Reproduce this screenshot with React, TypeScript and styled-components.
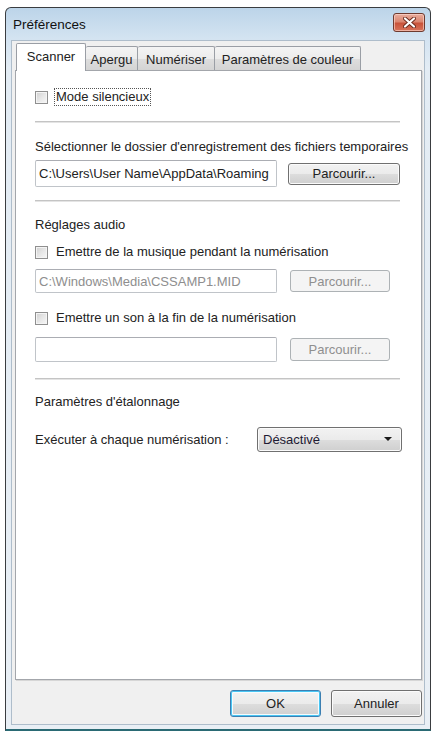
import React from "react";
import styled, { createGlobalStyle, css } from "styled-components";

const GlobalStyle = createGlobalStyle`
  html, body { margin: 0; padding: 0; background: #ffffff; }
  body {
    font-family: "Liberation Sans", Arial, sans-serif;
    font-size: 13px;
    color: #222222;
  }
  * { box-sizing: border-box; }
`;

const Window = styled.div`
  margin: 7px 0 0 5px;
  width: 426px;
  height: 724px;
  border: 1px solid #3a3d40;
  border-bottom: 2px solid #2a6a74;
  border-radius: 6px 6px 0 0;
  background: linear-gradient(#bcd4e9 0px, #d3e3f1 30px, #e3ecf4 60px, #e9eff5 100%);
  display: flex;
  flex-direction: column;
  padding: 0 5px 4px;
`;

const TitleBar = styled.div`
  height: 32px;
  display: flex;
  justify-content: space-between;
  align-items: flex-start;
  padding-left: 2px;
`;

const Title = styled.span`
  margin-top: 9px;
  font-size: 13.5px;
  color: #111;
`;

const CloseButton = styled.div`
  margin-top: 5px;
  width: 32px;
  height: 19px;
  border: 1px solid #6e3a2f;
  border-radius: 3px;
  background: linear-gradient(#e9ad9e 0%, #db8670 45%, #c9533a 55%, #d8735a 100%);
  box-shadow: inset 0 0 0 1px rgba(255, 220, 210, 0.6);
  display: flex;
  align-items: center;
  justify-content: center;
`;

const Client = styled.div`
  flex: 1;
  background: #f0f0f0;
  border: 1px solid #aebdcb;
  padding: 2px 2px 0 3px;
  display: flex;
  flex-direction: column;
`;

const TabStrip = styled.div`
  height: 27px;
  display: flex;
  align-items: flex-end;
  margin-left: 1px;
  position: relative;
  z-index: 1;
`;

const Tab = styled.div<{ $w: number; $active?: boolean }>`
  width: ${(p) => p.$w}px;
  height: 24px;
  border: 1px solid #9a9ea5;
  border-bottom: none;
  border-left-width: 0;
  border-radius: 2px 2px 0 0;
  background: linear-gradient(#f4f4f4 0%, #ececec 50%, #dedede 51%, #d4d4d4 100%);
  display: flex;
  align-items: center;
  justify-content: center;
  padding-top: 1px;
  color: #222;
  ${(p) =>
    p.$active &&
    css`
      height: 28px;
      margin-bottom: -1px;
      border-left-width: 1px;
      border-color: #9a9ea5;
      background: #ffffff;
      padding-top: 0;
      padding-bottom: 3px;
    `}
`;

const Panel = styled.div`
  height: 610px;
  background: #ffffff;
  border: 1px solid #a3a6ab;
  box-shadow: 1px 1px 0 #d6d6d6;
  display: flex;
  flex-direction: column;
  padding-left: 19px;
`;

const Row = styled.div<{ $mt: number; $h: number }>`
  margin-top: ${(p) => p.$mt}px;
  height: ${(p) => p.$h}px;
  display: flex;
  align-items: center;
`;

const Separator = styled.div<{ $mt: number }>`
  margin-top: ${(p) => p.$mt}px;
  width: 365px;
  height: 2px;
  border-top: 1px solid #c4c4c4;
  border-bottom: 1px solid #e4e4e4;
`;

const Label = styled.div<{ $mt: number }>`
  margin-top: ${(p) => p.$mt}px;
  height: 16px;
  line-height: 16px;
  white-space: nowrap;
`;

const CheckBox = styled.span`
  width: 13px;
  height: 13px;
  border: 1px solid #8f8f8f;
  background: linear-gradient(135deg, #cfcfcf 0%, #e6e6e6 50%, #f7f7f7 100%);
  box-shadow: inset 0 0 0 1px #f4f4f4;
  flex: none;
`;

const CheckText = styled.span<{ $focus?: boolean }>`
  margin-left: ${(p) => (p.$focus ? 6 : 8)}px;
  line-height: 16px;
  white-space: nowrap;
  ${(p) =>
    p.$focus &&
    css`
      border: 1px dotted #555;
      padding: 0 1px;
    `}
`;

const TextBox = styled.div<{ $h: number; $disabled?: boolean }>`
  width: 242px;
  height: ${(p) => p.$h}px;
  border: 1px solid #c0c4c9;
  border-top-color: #abadb3;
  border-radius: 2px;
  background: #ffffff;
  padding: 0 3px;
  display: flex;
  align-items: center;
  white-space: nowrap;
  color: ${(p) => (p.$disabled ? "#8e8e8e" : "#222")};
`;

const PushButton = styled.div<{ $w: number; $h: number; $ml?: number; $disabled?: boolean; $default?: boolean }>`
  width: ${(p) => p.$w}px;
  height: ${(p) => p.$h}px;
  margin-left: ${(p) => p.$ml ?? 0}px;
  border: 1px solid #707070;
  border-radius: 3px;
  background: linear-gradient(#f2f2f2 0%, #ebebeb 50%, #dddddd 51%, #cfcfcf 100%);
  box-shadow: inset 0 0 0 1px #fbfbfb;
  display: flex;
  align-items: center;
  justify-content: center;
  color: #222;
  flex: none;
  ${(p) =>
    p.$disabled &&
    css`
      border-color: #adb2b5;
      background: #f4f4f4;
      box-shadow: none;
      color: #8f8f8f;
    `}
  ${(p) =>
    p.$default &&
    css`
      border-color: #3c7fb1;
      box-shadow: inset 0 0 0 1px #48c5f3, inset 0 0 0 2px #f4fbfe;
    `}
`;

const ComboRow = styled.div<{ $mt: number }>`
  margin-top: ${(p) => p.$mt}px;
  width: 367px;
  height: 26px;
  display: flex;
  align-items: center;
  justify-content: space-between;
`;

const Combo = styled.div`
  width: 145px;
  height: 25px;
  border: 1px solid #707070;
  border-radius: 3px;
  background: linear-gradient(#f2f2f2 0%, #ebebeb 50%, #dddddd 51%, #cfcfcf 100%);
  box-shadow: inset 0 0 0 1px #fbfbfb;
  display: flex;
  align-items: center;
  justify-content: space-between;
  padding: 0 9px 0 5px;
  color: #1e1a33;
`;

const Arrow = styled.span`
  width: 0;
  height: 0;
  border-left: 4px solid transparent;
  border-right: 4px solid transparent;
  border-top: 4px solid #1b1b1b;
`;

const ButtonBar = styled.div`
  margin-top: 10px;
  display: flex;
  justify-content: flex-end;
  gap: 10px;
`;

export default function App() {
  return (
    <>
      <GlobalStyle />
      <Window>
        <TitleBar>
          <Title>Préférences</Title>
          <CloseButton>
            <svg width="13" height="11" viewBox="0 0 13 11">
              <path d="M2 1.5 L11 9.5 M11 1.5 L2 9.5" stroke="#6b2a1c" strokeWidth="4" strokeLinecap="round" />
              <path d="M2 1.5 L11 9.5 M11 1.5 L2 9.5" stroke="#ffffff" strokeWidth="2.2" strokeLinecap="round" />
            </svg>
          </CloseButton>
        </TitleBar>
        <Client>
          <TabStrip>
            <Tab $w={70} $active>Scanner</Tab>
            <Tab $w={52}>Apergu</Tab>
            <Tab $w={77}>Numériser</Tab>
            <Tab $w={146}>Paramètres de couleur</Tab>
          </TabStrip>
          <Panel>
            <Row $mt={17} $h={18}>
              <CheckBox />
              <CheckText $focus>Mode silencieux</CheckText>
            </Row>
            <Separator $mt={15} />
            <Label $mt={16}>Sélectionner le dossier d'enregistrement des fichiers temporaires</Label>
            <Row $mt={5} $h={27}>
              <TextBox $h={27}>C:\Users\User Name\AppData\Roaming</TextBox>
              <PushButton $w={112} $h={22} $ml={11}>Parcourir...</PushButton>
            </Row>
            <Separator $mt={13} />
            <Label $mt={15}>Réglages audio</Label>
            <Row $mt={10} $h={18}>
              <CheckBox />
              <CheckText>Emettre de la musique pendant la numérisation</CheckText>
            </Row>
            <Row $mt={8} $h={24}>
              <TextBox $h={24} $disabled>C:\Windows\Media\CSSAMP1.MID</TextBox>
              <PushButton $w={100} $h={22} $ml={13} $disabled>Parcourir...</PushButton>
            </Row>
            <Row $mt={16} $h={18}>
              <CheckBox />
              <CheckText>Emettre un son à la fin de la numérisation</CheckText>
            </Row>
            <Row $mt={10} $h={25}>
              <TextBox $h={25} $disabled />
              <PushButton $w={100} $h={23} $ml={13} $disabled>Parcourir...</PushButton>
            </Row>
            <Separator $mt={16} />
            <Label $mt={14}>Paramètres d'étalonnage</Label>
            <ComboRow $mt={16}>
              <span>Exécuter à chaque numérisation :</span>
              <Combo>
                <span>Désactivé</span>
                <Arrow />
              </Combo>
            </ComboRow>
          </Panel>
          <ButtonBar>
            <PushButton $w={91} $h={27} $default>OK</PushButton>
            <PushButton $w={91} $h={27}>Annuler</PushButton>
          </ButtonBar>
        </Client>
      </Window>
    </>
  );
}
